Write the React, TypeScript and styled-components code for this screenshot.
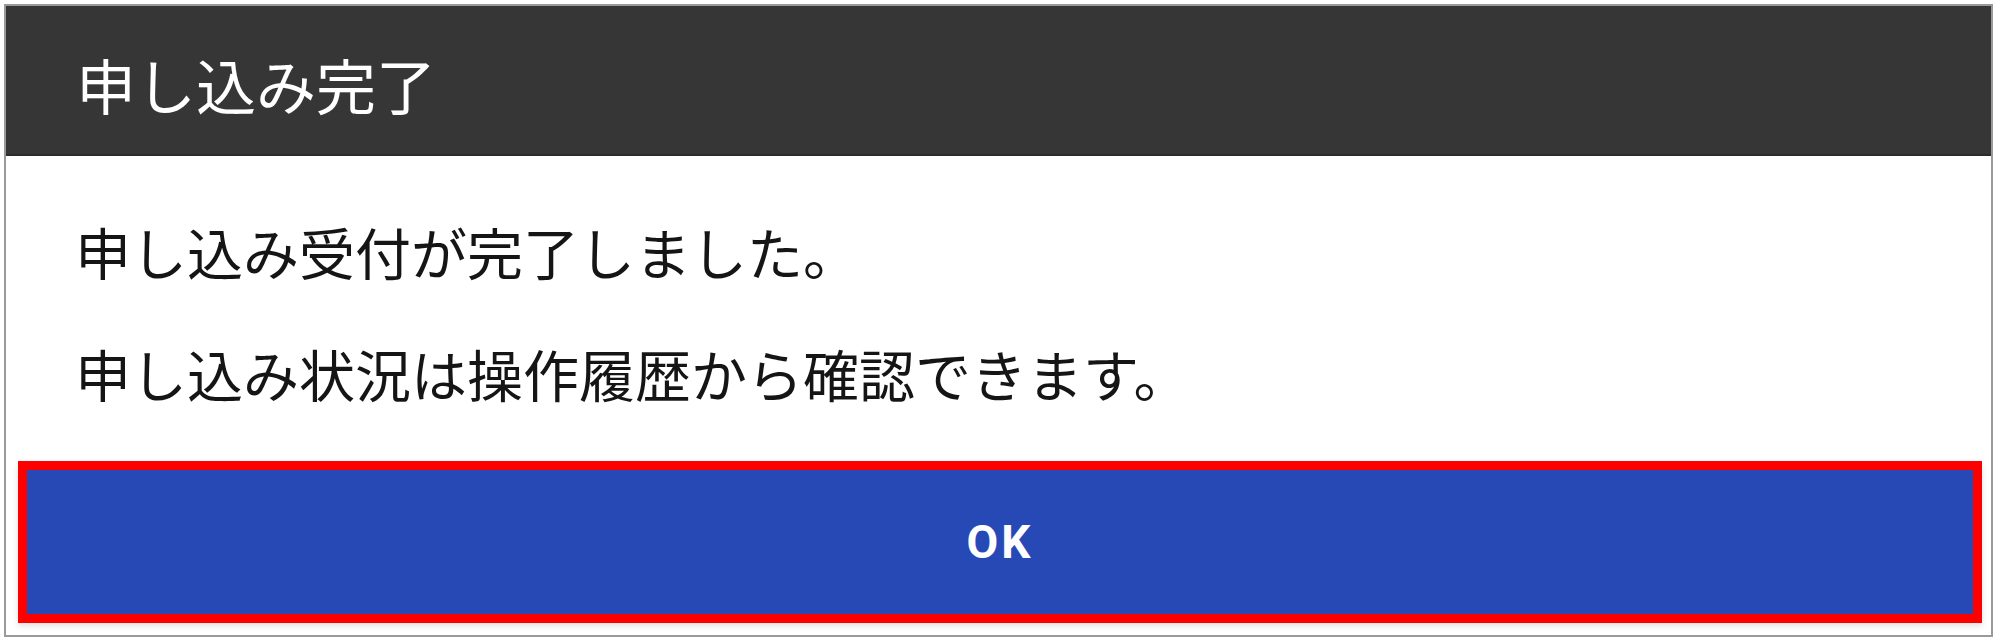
import React from "react";
import styled, { createGlobalStyle } from "styled-components";

const GlobalStyle = createGlobalStyle`
	html, body {
		margin: 0;
		padding: 0;
		background: #ffffff;
	}
	body {
		font-family: "Noto Sans CJK JP", "Noto Sans", sans-serif;
	}
`;

const Page = styled.div`
	padding: 4px 5px 4px 4px;
	box-sizing: border-box;
	width: 1998px;
	height: 641px;
`;

const Dialog = styled.div`
	display: flex;
	flex-direction: column;
	height: 633px;
	box-sizing: border-box;
	border: 2px solid #9a9a9a;
	background: #ffffff;
`;

const Header = styled.div`
	display: flex;
	align-items: center;
	height: 150px;
	box-sizing: border-box;
	padding: 6px 0 0 70px;
	background: #363636;
	border-bottom: 2px solid #2b2b2b;
	color: #ffffff;
	font-size: 60px;
	font-weight: 400;
`;

const Body = styled.div`
	display: flex;
	flex-direction: column;
	gap: 42px;
	padding: 55px 0 0 69px;
`;

const Message = styled.p`
	margin: 0;
	font-size: 56px;
	font-weight: 400;
	line-height: 80px;
	color: #151515;
`;

const Footer = styled.div`
	margin-top: auto;
	padding: 0 9px 12px 12px;
`;

const OkButton = styled.button`
	display: flex;
	align-items: center;
	justify-content: center;
	width: 100%;
	height: 162px;
	box-sizing: border-box;
	border: 9px solid #ff0000;
	background: #2749b6;
	color: #ffffff;
	font-family: "Roboto", "Liberation Sans", sans-serif;
	font-size: 46px;
	font-weight: 700;
	letter-spacing: 3px;
	box-shadow: 0 3px 6px rgba(0, 0, 0, 0.12);
	cursor: pointer;
`;

export default function App() {
	return (
		<>
			<GlobalStyle />
			<Page>
				<Dialog>
					<Header>申し込み完了</Header>
					<Body>
						<Message>申し込み受付が完了しました。</Message>
						<Message>申し込み状況は操作履歴から確認できます。</Message>
					</Body>
					<Footer>
						<OkButton>OK</OkButton>
					</Footer>
				</Dialog>
			</Page>
		</>
	);
}
